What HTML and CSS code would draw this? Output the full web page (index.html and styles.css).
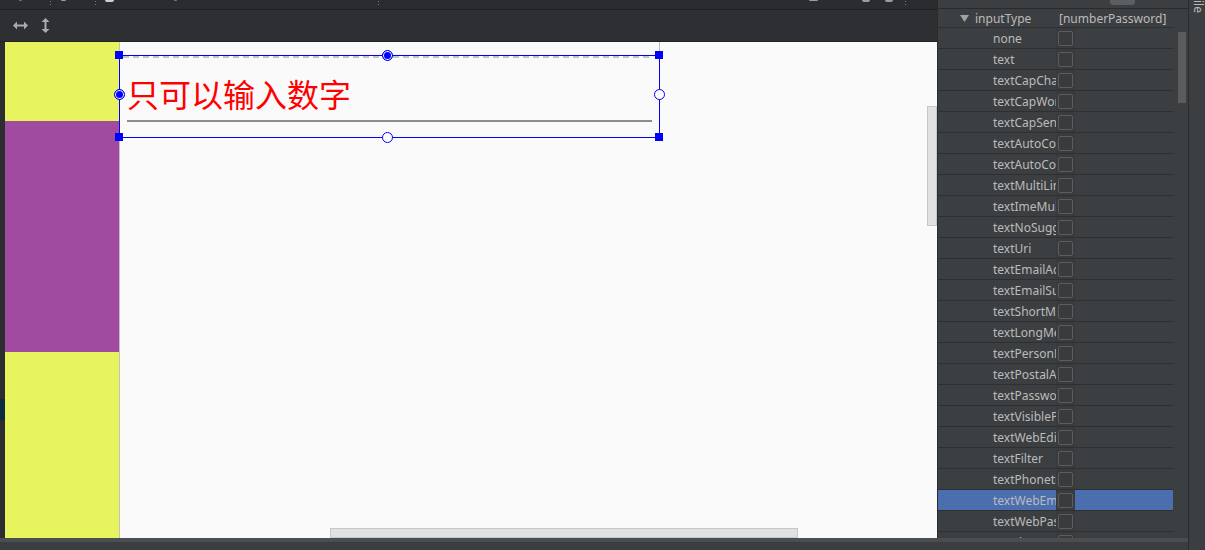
FILE: index.html
```html
<!DOCTYPE html>
<html lang="zh">
<head>
<meta charset="utf-8">
<title>Layout editor</title>
<link rel="stylesheet" href="styles.css">
</head>
<body>
<div class="app">
  <div class="work">
    <div class="cols">
      <div class="main">
        <div class="topstrip">
          <span class="tick blue t1"></span>
          <span class="sep t2"></span>
          <span class="tick t3"></span>
          <span class="sep t4"></span>
          <span class="tick bright t5"></span>
          <span class="tick blue t6"></span>
          <span class="sep t7"></span>
          <span class="tick t8"></span>
          <span class="tick t9"></span>
          <span class="tick t10"></span>
          <span class="sep t11"></span>
        </div>
        <div class="toolbar">
          <svg class="ico-h" width="15" height="9" viewBox="0 0 15 9"><path d="M0 4.5 L4 0.5 V3.5 H11 V0.5 L15 4.5 L11 8.5 V5.5 H4 V8.5 Z"/></svg>
          <svg class="ico-v" width="9" height="15" viewBox="0 0 9 15"><path d="M4.5 0 L8.5 4 H5.5 V11 H8.5 L4.5 15 L0.5 11 H3.5 V4 H0.5 Z"/></svg>
        </div>
        <div class="stage">
          <div class="gutter"><div class="gutter-mark"></div></div>
          <div class="canvas">
            <div class="layout-col">
              <div class="blk-y top"></div>
              <div class="blk-p"></div>
              <div class="blk-y bottom"></div>
            </div>
            <div class="screen">
              <div class="edittext">
                <span class="hint">只可以输入数字</span>
                <div class="underline"></div>
              </div>
              <div class="stub"></div>
              <div class="frame">
                <div class="dash"></div>
                <div class="sq tl"></div>
                <div class="sq tr"></div>
                <div class="sq bl"></div>
                <div class="sq br"></div>
                <div class="circ on c-top"></div>
                <div class="circ on c-left"></div>
                <div class="circ off c-right"></div>
                <div class="circ off c-bottom"></div>
              </div>
              <div class="vbar"></div>
              <div class="hbar"></div>
            </div>
          </div>
        </div>
      </div>
      <div class="panel">
        <div class="panel-head"><div class="head-btn"></div></div>
        <div class="panel-body">
          <div class="rows">
            <div class="row head">
              <div class="name"><svg class="tri" width="9" height="7" viewBox="0 0 9 7"><path d="M0 0 H9 L4.5 7 Z"/></svg><span>inputType</span></div>
              <div class="val">[numberPassword]</div>
            </div>
            <div class="row"><div class="name">none</div><div class="cbcell"><div class="cb"></div></div><div class="val"></div></div>
            <div class="row"><div class="name">text</div><div class="cbcell"><div class="cb"></div></div><div class="val"></div></div>
            <div class="row"><div class="name">textCapCharacters</div><div class="cbcell"><div class="cb"></div></div><div class="val"></div></div>
            <div class="row"><div class="name">textCapWords</div><div class="cbcell"><div class="cb"></div></div><div class="val"></div></div>
            <div class="row"><div class="name">textCapSentences</div><div class="cbcell"><div class="cb"></div></div><div class="val"></div></div>
            <div class="row"><div class="name">textAutoCorrect</div><div class="cbcell"><div class="cb"></div></div><div class="val"></div></div>
            <div class="row"><div class="name">textAutoComplete</div><div class="cbcell"><div class="cb"></div></div><div class="val"></div></div>
            <div class="row"><div class="name">textMultiLine</div><div class="cbcell"><div class="cb"></div></div><div class="val"></div></div>
            <div class="row"><div class="name">textImeMultiLine</div><div class="cbcell"><div class="cb"></div></div><div class="val"></div></div>
            <div class="row"><div class="name">textNoSuggestions</div><div class="cbcell"><div class="cb"></div></div><div class="val"></div></div>
            <div class="row"><div class="name">textUri</div><div class="cbcell"><div class="cb"></div></div><div class="val"></div></div>
            <div class="row"><div class="name">textEmailAddress</div><div class="cbcell"><div class="cb"></div></div><div class="val"></div></div>
            <div class="row"><div class="name">textEmailSubject</div><div class="cbcell"><div class="cb"></div></div><div class="val"></div></div>
            <div class="row"><div class="name">textShortMessage</div><div class="cbcell"><div class="cb"></div></div><div class="val"></div></div>
            <div class="row"><div class="name">textLongMessage</div><div class="cbcell"><div class="cb"></div></div><div class="val"></div></div>
            <div class="row"><div class="name">textPersonName</div><div class="cbcell"><div class="cb"></div></div><div class="val"></div></div>
            <div class="row"><div class="name">textPostalAddress</div><div class="cbcell"><div class="cb"></div></div><div class="val"></div></div>
            <div class="row"><div class="name">textPassword</div><div class="cbcell"><div class="cb"></div></div><div class="val"></div></div>
            <div class="row"><div class="name">textVisiblePassword</div><div class="cbcell"><div class="cb"></div></div><div class="val"></div></div>
            <div class="row"><div class="name">textWebEditText</div><div class="cbcell"><div class="cb"></div></div><div class="val"></div></div>
            <div class="row"><div class="name">textFilter</div><div class="cbcell"><div class="cb"></div></div><div class="val"></div></div>
            <div class="row"><div class="name">textPhonetic</div><div class="cbcell"><div class="cb"></div></div><div class="val"></div></div>
            <div class="row sel"><div class="name">textWebEmailAddress</div><div class="cbcell"><div class="cb"></div></div><div class="val"></div></div>
            <div class="row"><div class="name">textWebPassword</div><div class="cbcell"><div class="cb"></div></div><div class="val"></div></div>
            <div class="row"><div class="name">number</div><div class="cbcell"><div class="cb"></div></div><div class="val"></div></div>
          </div>
          <div class="vscroll"><div class="thumb"></div></div>
        </div>
      </div>
    </div>
    <div class="status"></div>
  </div>
  <div class="side"><span class="side-label">ile</span></div>
</div>
</body>
</html>
```
FILE: styles.css
```css
* { box-sizing: border-box; }
html, body { margin: 0; padding: 0; }
body {
  background: #2b2d30;
  font-family: "Noto Sans", "DejaVu Sans", sans-serif;
}
.app {
  display: flex;
  width: 1205px;
  height: 550px;
  overflow: hidden;
}
.work {
  width: 1188px;
  display: flex;
  flex-direction: column;
}
.cols {
  display: flex;
  height: 538px;
}
.main {
  width: 937px;
  display: flex;
  flex-direction: column;
}

/* top strip (cut-off toolbar) */
.topstrip {
  height: 10px;
  border-bottom: 1px solid #1e1f22;
  background: #2b2c2f;
  display: flex;
  align-items: flex-start;
  flex: none;
}
.tick { height: 1px; width: 8px; background: #9a9c9e; border-radius: 0 0 2px 2px; }
.tick.blue { width: 3px; background: #3e86c8; }
.tick.bright { height: 2px; width: 9px; background: #cfd0d1; }
.sep {
  width: 1px;
  height: 5px;
  margin-top: 1px;
  background: repeating-linear-gradient(180deg, #76787a 0 1px, transparent 1px 3px);
}
.t1 { margin-left: 19px; }
.t2 { margin-left: 28px; }
.t3 { margin-left: 10px; width: 5px; }
.t4 { margin-left: 29px; }
.t5 { margin-left: 9px; }
.t6 { margin-left: 60px; }
.t7 { margin-left: 201px; }
.t8 { margin-left: 430px; width: 9px; }
.t9 { margin-left: 44px; height: 2px; }
.t10 { margin-left: 15px; height: 2px; }
.t11 { margin-left: 12px; }

.toolbar {
  height: 32px;
  border-bottom: 1px solid #222325;
  background: #2d2f32;
  display: flex;
  align-items: center;
  padding-left: 13px;
  gap: 13px;
  flex: none;
}
.toolbar svg path { fill: #a9abad; }

.stage {
  flex: 1;
  display: flex;
  min-height: 0;
}
.gutter {
  width: 5px;
  background: #2b2d30;
  padding-top: 357px;
  flex: none;
}
.gutter-mark { height: 21px; background: #0d2b41; }
.canvas {
  flex: 1;
  display: flex;
  background: #fafafa;
  position: relative;
  overflow: hidden;
}
.layout-col {
  width: 115px;
  border-right: 1px solid #c2c2c2;
  display: flex;
  flex-direction: column;
  flex: none;
}
.blk-y { background: #e8f45e; }
.blk-y.top { height: 79px; }
.blk-p { height: 231px; background: #a04aa0; }
.blk-y.bottom { flex: 1; }

.screen {
  flex: 1;
  position: relative;
}
.edittext {
  width: 540px;
  margin-top: 13px;
  padding-top: 22px;
}
.hint {
  display: block;
  margin-left: 7px;
  font-family: "Noto Sans CJK SC", "Noto Sans", sans-serif;
  font-size: 32px;
  line-height: 32px;
  color: #ff0000;
  white-space: nowrap;
}
.underline {
  margin: 11px 0 0 7px;
  width: 525px;
  height: 2px;
  background: #8c8c8c;
}
.stub {
  position: absolute;
  left: 539px;
  top: 0;
  width: 1px;
  height: 13px;
  background: #bdbdbd;
}
.frame {
  position: absolute;
  left: -1px;
  top: 13px;
  width: 541px;
  height: 83px;
  border: 1px solid #0000ff;
}
.dash {
  position: absolute;
  left: 3px;
  right: 7px;
  top: 0;
  height: 2px;
  background: repeating-linear-gradient(90deg, #c4c4c4 0 6px, transparent 6px 10px);
}
.sq {
  position: absolute;
  width: 8px;
  height: 8px;
  background: #0000ff;
}
.sq.tl { left: -5px; top: -5px; }
.sq.tr { left: 535px; top: -5px; }
.sq.bl { left: -5px; top: 77px; }
.sq.br { left: 535px; top: 77px; }
.circ {
  position: absolute;
  width: 11px;
  height: 11px;
  border-radius: 50%;
  border: 1px solid #0000ff;
}
.circ.on { background: #0000ff; box-shadow: inset 0 0 0 1px #ffffff; }
.circ.off { background: #ffffff; }
.c-top { left: 262px; top: -6px; }
.c-left { left: -6px; top: 33px; }
.c-right { left: 534px; top: 33px; }
.c-bottom { left: 262px; top: 76px; }

.vbar {
  position: absolute;
  left: 807px;
  top: 64px;
  width: 10px;
  height: 120px;
  background: #e1e1e1;
  border: 1px solid #c8c8c8;
}
.hbar {
  position: absolute;
  left: 210px;
  bottom: 0;
  width: 468px;
  height: 10px;
  background: #e1e1e1;
  border: 1px solid #c8c8c8;
}

/* properties panel */
.panel {
  width: 251px;
  border-left: 1px solid #2b2b2b;
  background: #3c3f41;
  display: flex;
  flex-direction: column;
  overflow: hidden;
}
.panel-head {
  height: 9px;
  border-bottom: 1px solid #2b2b2b;
  flex: none;
}
.head-btn {
  margin-left: 172px;
  width: 25px;
  height: 5px;
  background: #5c5f61;
  border-radius: 0 0 3px 3px;
}
.panel-body {
  flex: 1;
  display: flex;
  min-height: 0;
  overflow: hidden;
}
.rows {
  width: 235px;
  flex: none;
}
.row {
  display: flex;
  height: 21px;
  border-bottom: 1px solid #2d2f30;
  font-size: 12px;
  color: #bbbbbb;
}
.row.head { height: 19px; }
.name {
  width: 118px;
  padding-left: 55px;
  overflow: hidden;
  white-space: nowrap;
  display: flex;
  align-items: center;
  flex: none;
}
.row.head .name { width: 121px; padding-left: 22px; }
.tri { margin-right: 6px; }
.tri path { fill: #a0a3a5; }
.cbcell {
  width: 19px;
  background: #393b3d;
  display: flex;
  align-items: center;
  padding-left: 2px;
  flex: none;
}
.cb {
  width: 15px;
  height: 15px;
  border: 1px solid #5b5e60;
  border-radius: 2px;
}
.val {
  flex: 1;
  display: flex;
  align-items: center;
  white-space: nowrap;
}
.row.sel .name, .row.sel .val { background: #4b6eaf; }

.vscroll {
  flex: 1;
  padding-left: 5px;
  padding-top: 23px;
}
.thumb {
  width: 8px;
  height: 71px;
  background: #5a5c5e;
}

.status {
  height: 12px;
  border-top: 4px solid #4b4e50;
  background: #3b3e41;
  flex: none;
}

.side {
  width: 17px;
  border-left: 1px solid #2b2b2b;
  background: #3c3f41;
}
.side-label {
  display: block;
  writing-mode: vertical-rl;
  font-size: 12px;
  line-height: 12px;
  color: #bbbbbb;
  margin-left: 3px;
  margin-top: 0;
}
```
